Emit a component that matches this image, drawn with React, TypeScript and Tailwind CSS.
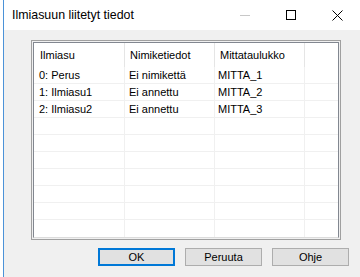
const rows = [
  { name: "0: Perus", label: "Ei nimikettä", table: "MITTA_1" },
  { name: "1: Ilmiasu1", label: "Ei annettu", table: "MITTA_2" },
  { name: "2: Ilmiasu2", label: "Ei annettu", table: "MITTA_3" },
];

const emptyRows = Array.from({ length: 10 - rows.length }, (_, i) => i);

function TitleBar() {
  return (
    <div className="flex h-[30px] items-center bg-white">
      <span className="pl-[8px] text-[12.4px] text-black">Ilmiasuun liitetyt tiedot</span>
      <div className="ml-auto flex h-full">
        <div className="flex h-full w-[46px] items-center justify-center">
          <div className="h-px w-[10px] bg-[#c8c8c8]" />
        </div>
        <div className="flex h-full w-[46px] items-center justify-center">
          <div className="h-[10px] w-[10px] border border-black" />
        </div>
        <div className="flex h-full w-[46px] items-center justify-center">
          <svg width="11" height="11" viewBox="0 0 11 11">
            <path d="M0.5 0.5 L10.5 10.5 M10.5 0.5 L0.5 10.5" stroke="#000" strokeWidth="1" />
          </svg>
        </div>
      </div>
    </div>
  );
}

function ListView() {
  return (
    <div className="h-[200px] w-[310px] border border-[#a0a0a0] bg-[#f0f0f0] p-px">
      <div className="flex h-full flex-col border border-[#828790] border-b-[#dcdcdc] bg-white">
        <div className="flex h-[24px] shrink-0">
          <div className="flex w-[91px] items-center border-r border-[#e5e5e5] pl-[6px]">Ilmiasu</div>
          <div className="flex w-[90px] items-center border-r border-[#e5e5e5] pl-[5px]">Nimiketiedot</div>
          <div className="flex w-[90px] items-center border-r border-[#e5e5e5] pl-[5px]">Mittataulukko</div>
          <div className="flex-1" />
        </div>
        {rows.map((r) => (
          <div key={r.name} className="flex h-[17px] shrink-0 border-b border-[#f0f0f0]">
            <div className="flex w-[91px] items-center border-r border-[#f0f0f0] pl-[5px]">{r.name}</div>
            <div className="flex w-[90px] items-center border-r border-[#f0f0f0] pl-[4px]">{r.label}</div>
            <div className="flex w-[90px] items-center border-r border-[#f0f0f0] pl-[3px]">{r.table}</div>
            <div className="flex-1" />
          </div>
        ))}
        {emptyRows.map((i) => (
          <div key={i} className="flex h-[17px] shrink-0 border-b border-[#f0f0f0] last:border-b-0">
            <div className="w-[91px] border-r border-[#f0f0f0]" />
            <div className="w-[90px] border-r border-[#f0f0f0]" />
            <div className="w-[90px] border-r border-[#f0f0f0]" />
            <div className="flex-1" />
          </div>
        ))}
      </div>
    </div>
  );
}

function DialogButton({ label, primary }: { label: string; primary?: boolean }) {
  return (
    <div
      className={
        primary
          ? "flex h-[18px] w-[77px] items-center justify-center border-2 border-[#0078d7] bg-[#e1e1e1]"
          : "flex h-[18px] w-[77px] items-center justify-center border border-[#adadad] bg-[#e1e1e1]"
      }
    >
      {label}
    </div>
  );
}

export default function App() {
  return (
    <div
      className="flex h-[277px] w-[360px] overflow-hidden bg-white text-[11px] text-black"
      style={{ fontFamily: '"Liberation Sans", Arial, sans-serif' }}
    >
      <div className="w-[3px] shrink-0 bg-white" />
      <div className="w-px shrink-0 bg-[#4b92d8]" />
      <div className="flex flex-1 flex-col">
        <TitleBar />
        <div className="flex-1 bg-[#f0f0f0] pl-[27px] pt-[10px]">
          <ListView />
          <div className="mt-[8px] flex gap-[10px] pl-[67px]">
            <DialogButton label="OK" primary />
            <DialogButton label="Peruuta" />
            <DialogButton label="Ohje" />
          </div>
        </div>
      </div>
    </div>
  );
}
